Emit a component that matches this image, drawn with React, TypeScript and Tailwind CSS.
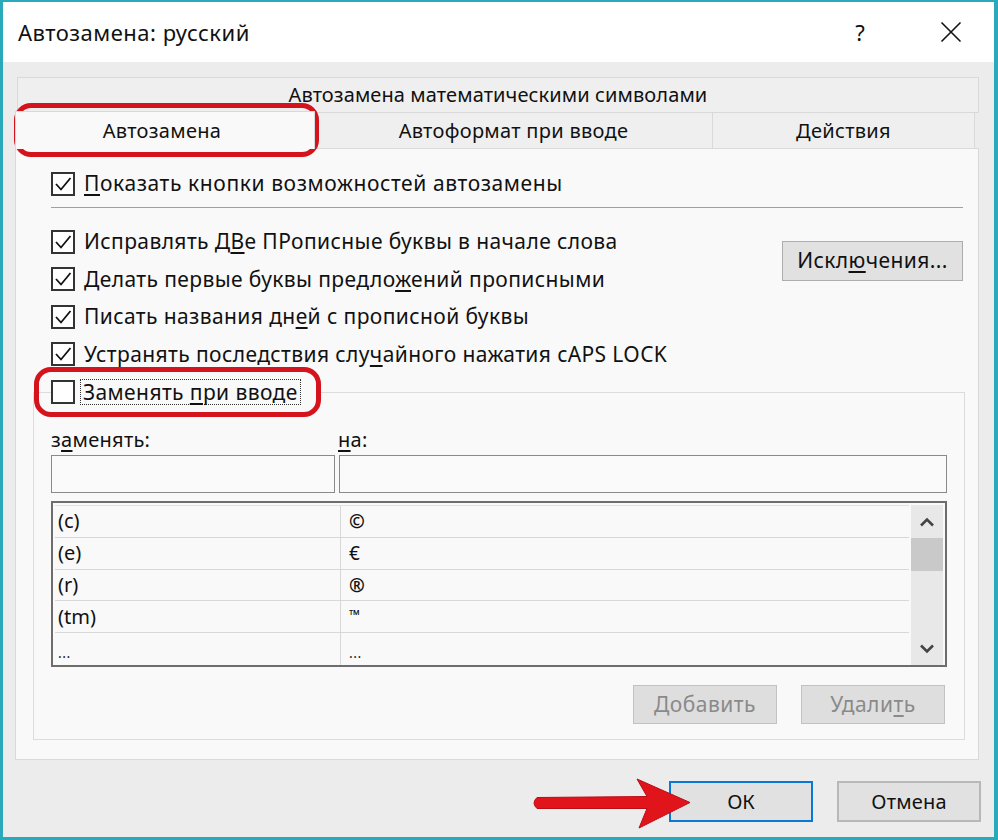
import React from "react";

const F = "font-['Noto_Sans',sans-serif]";

function Box({ checked }: { checked: boolean }) {
  return (
    <span className="w-[24px] h-[24px] border-[2px] border-[#333333] bg-white flex items-center justify-center shrink-0">
      {checked && (
        <svg width="18" height="16" viewBox="0 0 18 16">
          <path d="M2 8 L7 13.5 L16.5 2" fill="none" stroke="#111" strokeWidth="1.8" />
        </svg>
      )}
    </span>
  );
}

function Row({ checked, children }: { checked: boolean; children: React.ReactNode }) {
  return (
    <div className="h-[37.5px] flex items-center">
      <Box checked={checked} />
      <span className="ml-[9px] text-[21px] tracking-[0.4px] text-[#111] whitespace-nowrap">{children}</span>
    </div>
  );
}

function U({ children }: { children: React.ReactNode }) {
  return <span className="underline underline-offset-[3px] decoration-[1.5px]">{children}</span>;
}

function Chevron({ up }: { up: boolean }) {
  return (
    <svg width="16" height="10" viewBox="0 0 16 10">
      <path
        d={up ? "M2 8.5 L8 2.5 L14 8.5" : "M2 1.5 L8 7.5 L14 1.5"}
        fill="none"
        stroke="#444"
        strokeWidth="2.6"
      />
    </svg>
  );
}

const rows: [string, string][] = [
  ["(c)", "©"],
  ["(e)", "€"],
  ["(r)", "®"],
  ["(tm)", "™"],
  ["...", "..."],
];

function Dots() {
  return <span className="text-[14px] self-end pb-[2px] tracking-[0.5px] text-[#222]">...</span>;
}

export default function App() {
  return (
    <div className={`${F} relative w-[998px] h-[840px] bg-[#ececec] border-l-[3px] border-t-[2px] border-r-[4px] border-b-[3px] border-[#2aa9bb] flex flex-col text-[#111]`}>
      {/* Title bar */}
      <div className="h-[60px] bg-white flex items-center pl-[15px] shrink-0">
        <span className="text-[22px] tracking-[0.5px] text-[#111]">Автозамена: русский</span>
        <span className="ml-auto text-[22px] w-[20px] text-center mr-[70px]">?</span>
        <svg className="mr-[32px]" width="22" height="22" viewBox="0 0 22 22">
          <path d="M1.5 1.5 L20.5 20.5 M20.5 1.5 L1.5 20.5" stroke="#111" strokeWidth="1.6" />
        </svg>
      </div>

      {/* Body */}
      <div className="flex-1 flex flex-col pl-[12px] pr-[15px] pt-[15px]">
        {/* tab row 1 */}
        <div className="ml-[2px] h-[36px] border border-[#d9d9d9] bg-[#efefef] flex items-center justify-center text-[20px] tracking-[0.1px]">
          Автозамена математическими символами
        </div>
        {/* tab row 2 */}
        <div className="h-[35px] flex text-[20px] tracking-[0.3px]">
          <div className="relative z-10 -mt-[2px] w-[300px] h-[38px] bg-[#f9f9f9] border-l border-t border-r border-[#d9d9d9] flex items-center justify-center shrink-0 pr-[6px]">
            Автозамена
          </div>
          <div className="w-[398px] border-r border-[#d9d9d9] bg-[#efefef] flex items-center justify-center">
            Автоформат при вводе
          </div>
          <div className="w-[262px] border-r border-[#d9d9d9] bg-[#efefef] flex items-center justify-center">
            Действия
          </div>
        </div>

        {/* Panel */}
        <div className="h-[612px] border border-[#d9d9d9] bg-[#f9f9f9] flex flex-col pt-[16px]">
          <div className="pl-[35px] pr-[15px]">
            <div className="h-[38px] flex items-center">
              <Box checked />
              <span className="ml-[9px] text-[21px] tracking-[0.6px] whitespace-nowrap">
                <U>П</U>оказать кнопки возможностей автозамены
              </span>
            </div>
            <div className="mt-[4px] h-px bg-[#a0a0a0]" />
            <div className="mt-[15px] flex">
              <div className="flex-1 flex flex-col">
                <Row checked>
                  Исправлять Д<U>В</U>е ПРописные буквы в начале слова
                </Row>
                <Row checked>
                  Делать первые буквы предло<U>ж</U>ений прописными
                </Row>
                <Row checked>
                  Писать названия дн<U>е</U>й с прописной буквы
                </Row>
                <Row checked>
                  Устранять последствия слу<U>ч</U>айного нажатия cAPS LOCK
                </Row>
              </div>
              <div className="mt-[18px] w-[181px] h-[40px] bg-[#e1e1e1] border-[1.5px] border-[#adadad] flex items-center justify-center text-[21px] tracking-[0.4px]">
                Искл<U>ю</U>чения...
              </div>
            </div>
          </div>

          {/* Group box */}
          <fieldset className="ml-[17px] mr-[13px] border border-[#dcdcdc] pl-[17px] pr-[17px] pb-[15px]">
            <legend className="h-[38px] flex items-center pr-[20px]">
              <Box checked={false} />
              <span className="ml-[5px] px-[2px] border border-dotted border-[#333] text-[21px] tracking-[0.4px] leading-[24px] whitespace-nowrap">
                Заменять <U>п</U>ри вводе
              </span>
            </legend>
            <div className="mt-[14px] h-[30px] grid grid-cols-[284px_1fr] gap-[4px] text-[20px] tracking-[0.3px] items-center">
              <span>
                з<U>а</U>менять:
              </span>
              <span className="-ml-[1px]">
                <U>н</U>а:
              </span>
            </div>
            <div className="grid grid-cols-[284px_1fr] gap-[4px] h-[38px]">
              <div className="border-[1.5px] border-[#8a8a8a] bg-[#fafafa]" />
              <div className="border-[1.5px] border-[#8a8a8a] bg-[#fafafa]" />
            </div>
            <div className="mt-[8px] h-[166px] border-2 border-[#6d6d6d] bg-[#f9f9f9] flex pt-[2px] pl-[2px] pr-[2px]">
              <div className="flex-1 flex flex-col border-t border-[#e2e2e2]">
                {rows.map(([a, b], i) => (
                  <div
                    key={i}
                    className={`h-[32px] flex text-[20px] ${i < 4 ? "border-b-[1.5px] border-[#d8d8d8]" : ""}`}
                  >
                    <div className="w-[286px] border-r border-[#d8d8d8] pl-[3px] flex items-center">
                      {a === "..." ? <Dots /> : a}
                    </div>
                    <div className="flex-1 pl-[8px] flex items-center">
                      {b === "..." ? (
                        <Dots />
                      ) : b === "™" ? (
                        <span className="text-[14px] self-start pt-[3px]">™</span>
                      ) : b === "€" ? (
                        <span className="text-[19px]">{b}</span>
                      ) : (
                        <span className="text-[19px] font-bold">{b}</span>
                      )}
                    </div>
                  </div>
                ))}
              </div>
              <div className="ml-[2px] w-[32px] bg-[#e8e8e8] flex flex-col">
                <div className="h-[33px] flex items-center justify-center">
                  <Chevron up />
                </div>
                <div className="h-[33px] bg-[#c9c9c9]" />
                <div className="flex-1" />
                <div className="h-[33px] flex items-center justify-center">
                  <Chevron up={false} />
                </div>
              </div>
            </div>
            <div className="mt-[18px] flex justify-end gap-[24px] mr-[2px]">
              <div className="w-[144px] h-[39px] bg-[#dedede] border-[1.5px] border-[#c2c2c2] flex items-center justify-center text-[21px] tracking-[0.5px] text-[#8a8a8a]">
                <U>Д</U>обавить
              </div>
              <div className="w-[144px] h-[39px] bg-[#dedede] border-[1.5px] border-[#c2c2c2] flex items-center justify-center text-[21px] tracking-[0.5px] text-[#8a8a8a]">
                Удали<U>т</U>ь
              </div>
            </div>
          </fieldset>
        </div>

        {/* Dialog buttons */}
        <div className="mt-[21px] flex justify-end gap-[24px] -mr-[2px]">
          <div className="w-[144px] h-[41px] bg-[#e1e1e1] border-2 border-[#0a78d4] flex items-center justify-center text-[20px]">
            ОК
          </div>
          <div className="w-[144px] h-[41px] bg-[#e1e1e1] border-2 border-[#b8b8b8] flex items-center justify-center text-[20px] tracking-[0.2px]">
            Отмена
          </div>
        </div>
      </div>

      {/* Annotations */}
      <div className="absolute left-[11px] top-[101px] w-[305px] h-[54px] border-[5px] border-[#d5131c] rounded-[17px] pointer-events-none" />
      <div className="absolute left-[31px] top-[365px] w-[287px] h-[50px] border-[5px] border-[#d5131c] rounded-[17px] pointer-events-none" />
      <svg className="absolute left-[522px] top-[772px] pointer-events-none" width="170" height="60" viewBox="522 772 170 60">
        <path
          d="M534 795.5 L644 794.5 L634 777 L687 800.5 L636 826 L644 806.5 L534 806.5 Q528 801 534 795.5 Z"
          fill="#e1141c"
          stroke="#b80e14"
          strokeWidth="1"
          strokeLinejoin="round"
        />
      </svg>
    </div>
  );
}
